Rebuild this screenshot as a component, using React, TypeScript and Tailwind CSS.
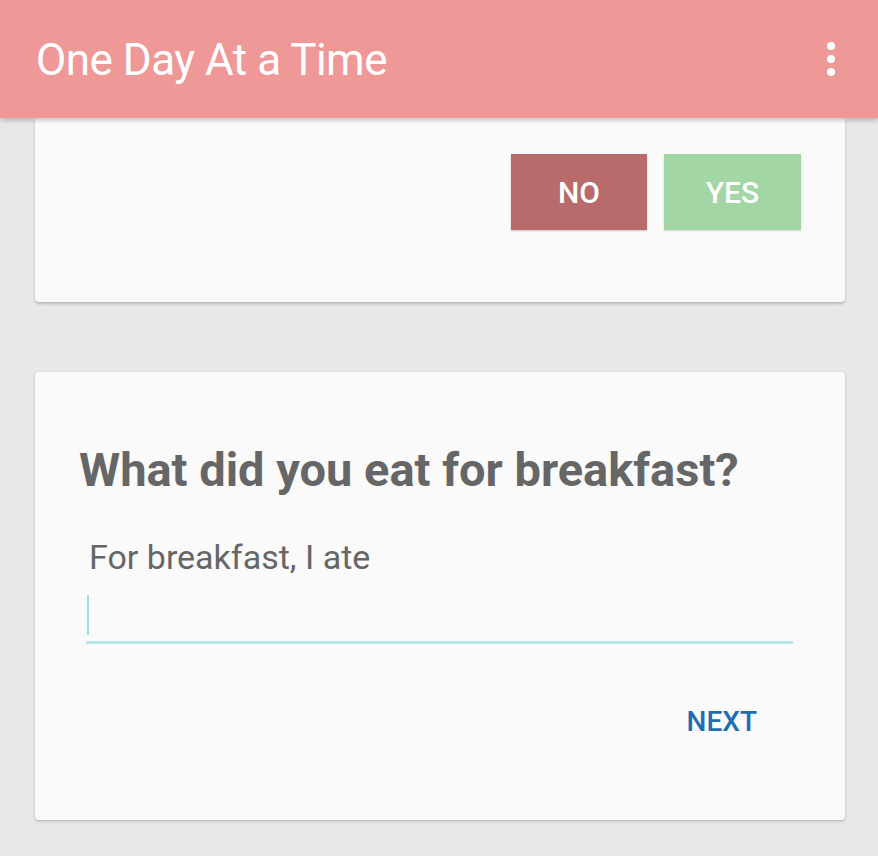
import React from "react";

export default function App() {
  return (
    <div className="w-[878px] h-[856px] bg-[#e8e8e8] overflow-hidden flex flex-col" style={{ fontFamily: "Roboto, 'Noto Sans', sans-serif" }}>
      <header className="relative z-10 h-[118px] shrink-0 bg-[#ee9898] flex items-center justify-between pl-[36px] pr-[43px] shadow-[0_3px_4px_rgba(0,0,0,0.18)]">
        <h1 className="text-white text-[44px] leading-none tracking-[-0.5px] font-normal mt-[2px]">One Day At a Time</h1>
        <div className="flex flex-col gap-[5px] items-center">
          <span className="w-[8px] h-[8px] rounded-full bg-white" />
          <span className="w-[8px] h-[8px] rounded-full bg-white" />
          <span className="w-[8px] h-[8px] rounded-full bg-white" />
        </div>
      </header>
      <div className="px-[35px] pr-[33px] flex flex-col gap-[70px]">
        <section className="h-[184px] bg-[#fafafa] rounded-b-[4px] shadow-[0_2px_3px_rgba(0,0,0,0.2)] flex justify-end items-start pt-[36px] pr-[44px] gap-[17px]">
          <button className="w-[136px] h-[76px] bg-[#b96a6a] text-white text-[30px] font-medium shadow-[0_1px_2px_rgba(0,0,0,0.2)]">NO</button>
          <button className="w-[137px] h-[76px] bg-[#a3d6a5] text-white text-[30px] font-medium shadow-[0_1px_2px_rgba(0,0,0,0.15)]">YES</button>
        </section>
        <section className="h-[448px] bg-[#fafafa] rounded-[4px] shadow-[0_1px_3px_rgba(0,0,0,0.25)] flex flex-col pl-[44px] pr-[52px]">
          <h2 className="mt-[70px] text-[#666666] text-[47px] font-bold leading-[56px]">What did you eat for breakfast?</h2>
          <p className="mt-[39px] ml-[10px] text-[#666666] text-[34px] leading-[40px]">For breakfast, I ate</p>
          <div className="mt-[18px] ml-[7px] h-[49px] border-b-[3px] border-[#b4e6ea] flex items-start">
            <span className="w-[2px] h-[40px] bg-[#9edde3] ml-[1px]" />
          </div>
          <div className="flex justify-end mt-[64px] pr-[36px]">
            <span className="text-[#1f6db3] text-[28px] font-medium leading-none">NEXT</span>
          </div>
        </section>
      </div>
    </div>
  );
}
